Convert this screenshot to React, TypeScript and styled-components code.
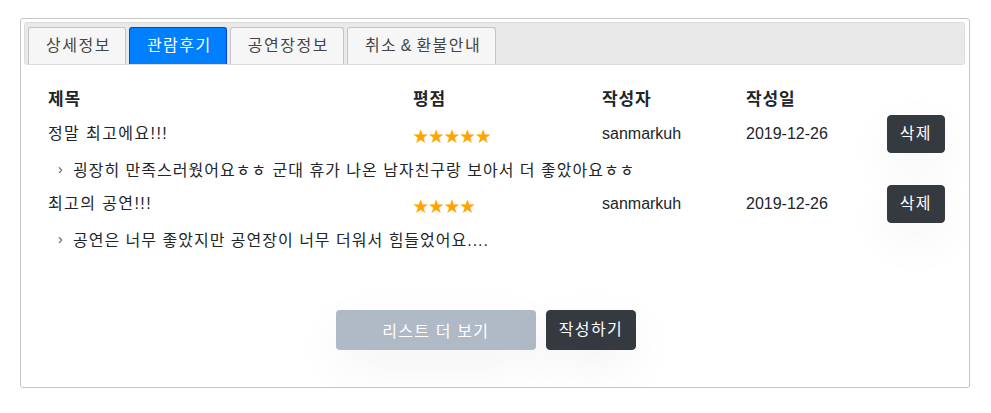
import React from "react";
import styled, { createGlobalStyle } from "styled-components";

const GlobalStyle = createGlobalStyle`
  html, body { margin: 0; padding: 0; background: #fff; }
  body {
    font-family: "Liberation Sans", "Noto Sans CJK KR", sans-serif;
    color: #212529;
  }
  * { box-sizing: border-box; }
`;

const Page = styled.div`
  padding: 18px 21px 0 20px;
`;

const Card = styled.div`
  width: 950px;
  border: 1px solid #c5c5c5;
  border-radius: 3px;
  padding: 3px 4px 0 3px;
  background: #fff;
`;

const TabBar = styled.div`
  display: flex;
  gap: 3px;
  height: 43px;
  padding: 4px 4px 0 3px;
  background: #e9e9e9;
  border: 1px solid #dddddd;
  border-radius: 3px;
`;

const Tab = styled.div<{ $active?: boolean }>`
  height: 37px;
  padding: 0 14px 0 17px;
  display: flex;
  align-items: center;
  font-size: 16px;
  letter-spacing: 1.5px;
  word-spacing: -2.5px;
  line-height: 1;
  border: 1px solid ${(p) => (p.$active ? "#003eff" : "#c5c5c5")};
  border-bottom: 0;
  border-radius: 3px 3px 0 0;
  background: ${(p) => (p.$active ? "#007fff" : "#f6f6f6")};
  color: ${(p) => (p.$active ? "#ffffff" : "#454545")};
  white-space: pre;
`;

const Content = styled.div`
  padding: 20px 20px 37px 24px;
`;

const Grid = styled.div`
  display: grid;
  grid-template-columns: 365px 189px 144px 1fr auto;
  align-items: center;
`;

const HeadCell = styled.div`
  height: 30px;
  line-height: 30px;
  font-size: 17px;
  letter-spacing: 0.8px;
  font-weight: bold;
  color: #212529;
`;

const Cell = styled.div<{ $ko?: boolean }>`
  font-size: 16px;
  line-height: 24px;
  letter-spacing: ${(p) => (p.$ko ? "1.4px" : "0")};
  color: #212529;
  white-space: pre;
`;

const Stars = styled.div`
  font-family: "Noto Sans CJK KR", sans-serif;
  font-size: 15.6px;
  line-height: 24px;
  color: #ffa500;
  padding-top: 2px;
`;

const DarkButton = styled.button<{ $h?: number }>`
  height: ${(p) => p.$h ?? 38}px;
  padding: 0 12px;
  border: 1px solid #343a40;
  border-radius: 4px;
  background: #343a40;
  color: #fff;
  font-family: "Liberation Sans", "Noto Sans CJK KR", sans-serif;
  font-size: 16px;
  letter-spacing: 1.4px;
  line-height: 1;
  box-shadow: 0 1rem 3rem rgba(0, 0, 0, 0.05);
  cursor: pointer;
`;

const Comment = styled.div`
  grid-column: 1 / -1;
  height: 32px;
  display: flex;
  align-items: center;
  padding-left: 10px;
  font-size: 16px;
  letter-spacing: 1px;
  color: #212529;
  white-space: pre;
`;

const Chevron = styled.span`
  display: inline-block;
  width: 15px;
  color: #555;
  font-size: 14px;
  letter-spacing: 0;
`;

const Actions = styled.div`
  display: flex;
  justify-content: center;
  gap: 10px;
  margin-top: 55px;
  padding-right: 21px;
`;

const MoreButton = styled.button`
  width: 200px;
  height: 40px;
  border: 0;
  border-radius: 4px;
  background: #b0b9c6;
  color: #fff;
  font-family: "Liberation Sans", "Noto Sans CJK KR", sans-serif;
  font-size: 16px;
  letter-spacing: 1.2px;
  box-shadow: 0 1rem 3rem rgba(0, 0, 0, 0.05);
`;

const reviews = [
  {
    title: "정말 최고에요!!!",
    stars: 5,
    author: "sanmarkuh",
    date: "2019-12-26",
    body: "굉장히 만족스러웠어요ㅎㅎ 군대 휴가 나온 남자친구랑 보아서 더 좋았아요ㅎㅎ",
  },
  {
    title: "최고의 공연!!!",
    stars: 4,
    author: "sanmarkuh",
    date: "2019-12-26",
    body: "공연은 너무 좋았지만 공연장이 너무 더워서 힘들었어요....",
  },
];

const tabs = ["상세정보", "관람후기", "공연장정보", "취소 & 환불안내"];

export default function App() {
  return (
    <Page>
      <GlobalStyle />
      <Card>
        <TabBar>
          {tabs.map((t) => (
            <Tab key={t} $active={t === "관람후기"}>
              {t}
            </Tab>
          ))}
        </TabBar>
        <Content>
          <Grid>
            <HeadCell>제목</HeadCell>
            <HeadCell>평점</HeadCell>
            <HeadCell>작성자</HeadCell>
            <HeadCell>작성일</HeadCell>
            <HeadCell />
            {reviews.map((r, i) => (
              <React.Fragment key={i}>
                <Cell $ko>{r.title}</Cell>
                <Stars>{"★".repeat(r.stars)}</Stars>
                <Cell>{r.author}</Cell>
                <Cell>{r.date}</Cell>
                <DarkButton>삭제</DarkButton>
                <Comment>
                  <Chevron>›</Chevron>
                  {r.body}
                </Comment>
              </React.Fragment>
            ))}
          </Grid>
          <Actions>
            <MoreButton>리스트 더 보기</MoreButton>
            <DarkButton $h={40}>작성하기</DarkButton>
          </Actions>
        </Content>
      </Card>
    </Page>
  );
}
